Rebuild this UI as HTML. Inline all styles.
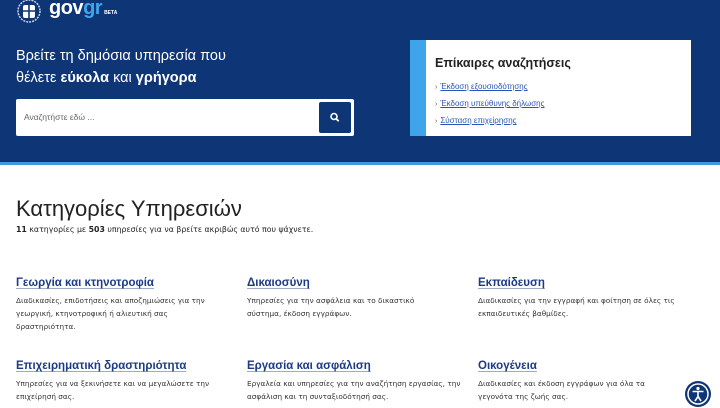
<!DOCTYPE html>
<html><head><meta charset="utf-8"><style>
*{margin:0;padding:0;box-sizing:border-box}
body{width:720px;height:405px;overflow:hidden;background:#fff;font-family:"Liberation Sans","DejaVu Sans",sans-serif;position:relative}
.hdr{position:absolute;left:0;top:0;width:720px;height:162px;background:#0e3576}
.stripe{position:absolute;left:0;top:162px;width:720px;height:3px;background:#3e9be0}
.a{position:absolute;white-space:nowrap}
.h1{color:#fff;font-size:14.5px;left:16px}
.search{position:absolute;left:16px;top:99px;width:338px;height:37px;background:#fff;border-radius:2px}
.btn{position:absolute;left:319px;top:102px;width:32px;height:31px;background:#0e3576;border-radius:2px}
.card{position:absolute;left:410px;top:40px;width:281px;height:96px;background:#fff;border-left:16px solid #3fa5ea}
.lk{font-size:8px;color:#2a55b8;text-decoration:underline;left:435px}
.lk b{color:#555;font-weight:normal;text-decoration:none;display:inline-block;margin-right:3px;font-size:7px}
.t{font-size:11.5px;font-weight:bold;color:#1d3a84;text-decoration:underline;text-decoration-color:#a0aac8;text-underline-offset:2px}
.d{font-family:"DejaVu Sans",sans-serif;font-size:7.3px;color:#333;line-height:13px;width:212px;white-space:normal}
</style></head><body>
<div class="hdr"></div><div class="stripe"></div>
<svg class="a" style="left:16px;top:0" width="26" height="24" viewBox="0 0 26 24"><circle cx="13" cy="11" r="11" fill="none" stroke="#c8d2e4" stroke-width="1.5" stroke-dasharray="2 1"/><rect x="7" y="5" width="12" height="13" rx="2" fill="#fff"/><path d="M13 5v13M7 11h12" stroke="#0e3576" stroke-width="1.6"/></svg>
<div class="a" style="left:49px;top:-3px;color:#fff;font-size:20px;font-weight:bold;letter-spacing:-0.5px">gov<span style="color:#3fa5ea">gr</span><span style="font-size:5px;color:#fff;margin-left:2px;letter-spacing:0">BETA</span></div>
<div class="a h1" style="top:48px">Βρείτε τη δημόσια υπηρεσία που</div>
<div class="a h1" style="top:70px">θέλετε <b>εύκολα</b> και <b>γρήγορα</b></div>
<div class="search"></div>
<div class="a" style="left:24px;top:112px;font-size:8.5px;color:#666">Αναζητήστε εδώ ...</div>
<div class="btn"><svg width="32" height="31" viewBox="0 0 32 31"><circle cx="15" cy="14.5" r="3" fill="none" stroke="#fff" stroke-width="1.6"/><path d="M17.2 16.7l2.5 2.5" stroke="#fff" stroke-width="1.8"/></svg></div>
<div class="card"></div>
<div class="a" style="left:435px;top:56px;font-size:12.5px;font-weight:bold;color:#222">Επίκαιρες αναζητήσεις</div>
<div class="a lk" style="top:82px"><b>›</b>Έκδοση εξουσιοδότησης</div>
<div class="a lk" style="top:99px"><b>›</b>Έκδοση υπεύθυνης δήλωσης</div>
<div class="a lk" style="top:116px"><b>›</b>Σύσταση επιχείρησης</div>
<div class="a" style="left:16px;top:196px;font-size:22px;color:#222">Κατηγορίες Υπηρεσιών</div>
<div class="a" style="left:16px;top:225px;font-size:7.8px;color:#222;font-family:'DejaVu Sans',sans-serif"><b>11</b> κατηγορίες με <b>503</b> υπηρεσίες για να βρείτε ακριβώς αυτό που ψάχνετε.</div>
<div class="a t" style="left:16px;top:277px">Γεωργία και κτηνοτροφία</div>
<div class="a d" style="left:16px;top:294px">Διαδικασίες, επιδοτήσεις και αποζημιώσεις για την γεωργική, κτηνοτροφική ή αλιευτική σας δραστηριότητα.</div>
<div class="a t" style="left:247px;top:277px">Δικαιοσύνη</div>
<div class="a d" style="left:247px;top:294px;width:190px">Υπηρεσίες για την ασφάλεια και το δικαστικό σύστημα, έκδοση εγγράφων.</div>
<div class="a t" style="left:478px;top:277px">Εκπαίδευση</div>
<div class="a d" style="left:478px;top:294px;width:225px">Διαδικασίες για την εγγραφή και φοίτηση σε όλες τις εκπαιδευτικές βαθμίδες.</div>
<div class="a t" style="left:16px;top:360px">Επιχειρηματική δραστηριότητα</div>
<div class="a d" style="left:16px;top:377px">Υπηρεσίες για να ξεκινήσετε και να μεγαλώσετε την επιχείρησή σας.</div>
<div class="a t" style="left:247px;top:360px">Εργασία και ασφάλιση</div>
<div class="a d" style="left:247px;top:377px;width:220px">Εργαλεία και υπηρεσίες για την αναζήτηση εργασίας, την ασφάλιση και τη συνταξιοδότησή σας.</div>
<div class="a t" style="left:478px;top:360px">Οικογένεια</div>
<div class="a d" style="left:478px;top:377px;width:185px">Διαδικασίες και έκδοση εγγράφων για όλα τα γεγονότα της ζωής σας.</div>
<svg class="a" style="left:684px;top:380px" width="28" height="28" viewBox="0 0 28 28"><circle cx="14" cy="14" r="13" fill="#0e3576"/><circle cx="14" cy="14" r="10" fill="none" stroke="#fff" stroke-width="1.5"/><circle cx="14" cy="8.5" r="1.6" fill="#fff"/><path d="M8.5 11.5h11M14 11.5v5M14 16.5l-3 4.5M14 16.5l3 4.5" stroke="#fff" stroke-width="1.6" fill="none"/></svg>
</body></html>
